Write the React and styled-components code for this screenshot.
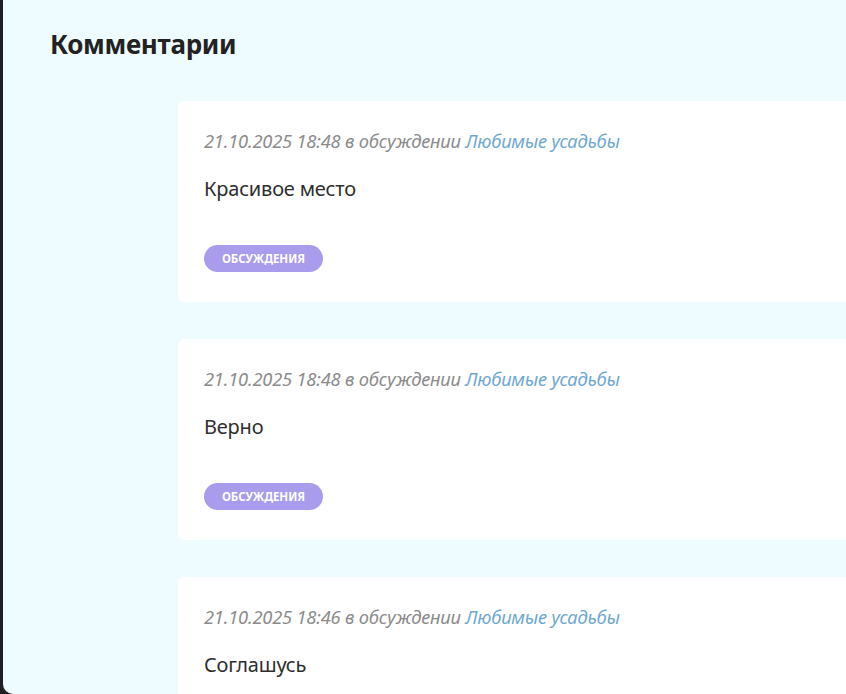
import styled, { createGlobalStyle } from "styled-components";

const GlobalStyle = createGlobalStyle`
  html, body {
    margin: 0;
    padding: 0;
    background: #1f2023;
    overflow: hidden;
  }
  * { box-sizing: border-box; }
`;

const Frame = styled.div`
  margin-left: 3px;
  height: 694px;
  overflow: hidden;
  background: #effcff;
  border-bottom-left-radius: 10px;
  font-family: "Noto Sans", "Open Sans", sans-serif;
`;

const Title = styled.h1`
  margin: 0;
  padding: 26px 0 0 47px;
  font-size: 26px;
  line-height: 36px;
  font-weight: 700;
  color: #222;
  letter-spacing: -0.3px;
`;

const List = styled.div`
  display: flex;
  flex-direction: column;
  gap: 37px;
  margin: 39px 0 0 175px;
`;

const Card = styled.div`
  background: #fff;
  border-radius: 6px 0 0 6px;
  padding: 28px 26px 30px;
  height: 201px;
  display: flex;
  flex-direction: column;
  align-items: flex-start;
`;

const Meta = styled.div`
  font-size: 18.3px;
  line-height: 24px;
  font-style: italic;
  color: #8b8b8b;
  letter-spacing: -0.2px;
  white-space: nowrap;
`;

const TopicLink = styled.a`
  color: #6fa8cf;
  text-decoration: none;
`;

const Body = styled.p`
  margin: 24px 0 0;
  font-size: 20px;
  line-height: 24px;
  color: #2e2e2e;
  letter-spacing: -0.2px;
`;

const Badge = styled.span`
  margin-top: 44px;
  height: 27px;
  padding: 0 18px;
  display: inline-flex;
  align-items: center;
  border-radius: 14px;
  background: #a99cec;
  color: #fff;
  font-size: 11.5px;
  font-weight: 700;
  text-transform: uppercase;
  letter-spacing: -0.1px;
`;

const comments = [
  { date: "21.10.2025 18:48", topic: "Любимые усадьбы", text: "Красивое место" },
  { date: "21.10.2025 18:48", topic: "Любимые усадьбы", text: "Верно" },
  { date: "21.10.2025 18:46", topic: "Любимые усадьбы", text: "Соглашусь" },
];

export default function App() {
  return (
    <>
      <GlobalStyle />
      <Frame>
        <Title>Комментарии</Title>
        <List>
          {comments.map((c, i) => (
            <Card key={i}>
              <Meta>
                {c.date} в обсуждении <TopicLink href="#">{c.topic}</TopicLink>
              </Meta>
              <Body>{c.text}</Body>
              <Badge>Обсуждения</Badge>
            </Card>
          ))}
        </List>
      </Frame>
    </>
  );
}
